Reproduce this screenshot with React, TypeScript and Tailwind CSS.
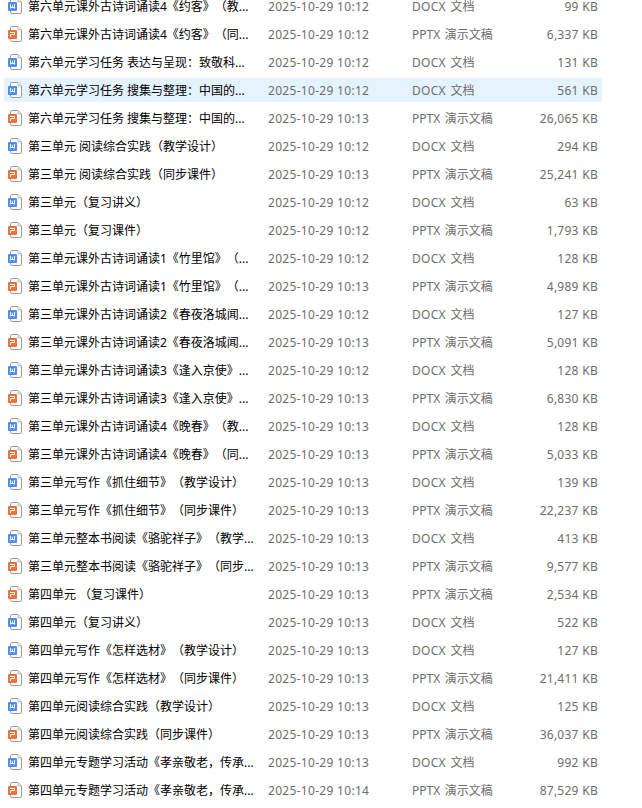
type FileKind = "docx" | "pptx";

type FileRow = {
  name: string;
  kind: FileKind;
  time: string;
  size: string;
};

const DAY = "2025-10-29";

const files: FileRow[] = [
  { name: "第六单元课外古诗词诵读4《约客》（教...", kind: "docx", time: "10:12", size: "99" },
  { name: "第六单元课外古诗词诵读4《约客》（同...", kind: "pptx", time: "10:12", size: "6,337" },
  { name: "第六单元学习任务 表达与呈现：致敬科...", kind: "docx", time: "10:12", size: "131" },
  { name: "第六单元学习任务 搜集与整理：中国的...", kind: "docx", time: "10:12", size: "561" },
  { name: "第六单元学习任务 搜集与整理：中国的...", kind: "pptx", time: "10:13", size: "26,065" },
  { name: "第三单元 阅读综合实践（教学设计）", kind: "docx", time: "10:12", size: "294" },
  { name: "第三单元 阅读综合实践（同步课件）", kind: "pptx", time: "10:13", size: "25,241" },
  { name: "第三单元（复习讲义）", kind: "docx", time: "10:12", size: "63" },
  { name: "第三单元（复习课件）", kind: "pptx", time: "10:12", size: "1,793" },
  { name: "第三单元课外古诗词诵读1《竹里馆》（...", kind: "docx", time: "10:12", size: "128" },
  { name: "第三单元课外古诗词诵读1《竹里馆》（...", kind: "pptx", time: "10:13", size: "4,989" },
  { name: "第三单元课外古诗词诵读2《春夜洛城闻...", kind: "docx", time: "10:12", size: "127" },
  { name: "第三单元课外古诗词诵读2《春夜洛城闻...", kind: "pptx", time: "10:13", size: "5,091" },
  { name: "第三单元课外古诗词诵读3《逢入京使》...", kind: "docx", time: "10:12", size: "128" },
  { name: "第三单元课外古诗词诵读3《逢入京使》...", kind: "pptx", time: "10:13", size: "6,830" },
  { name: "第三单元课外古诗词诵读4《晚春》（教...", kind: "docx", time: "10:13", size: "128" },
  { name: "第三单元课外古诗词诵读4《晚春》（同...", kind: "pptx", time: "10:13", size: "5,033" },
  { name: "第三单元写作《抓住细节》（教学设计）", kind: "docx", time: "10:13", size: "139" },
  { name: "第三单元写作《抓住细节》（同步课件）", kind: "pptx", time: "10:13", size: "22,237" },
  { name: "第三单元整本书阅读《骆驼祥子》（教学...", kind: "docx", time: "10:13", size: "413" },
  { name: "第三单元整本书阅读《骆驼祥子》（同步...", kind: "pptx", time: "10:13", size: "9,577" },
  { name: "第四单元 （复习课件）", kind: "pptx", time: "10:13", size: "2,534" },
  { name: "第四单元（复习讲义）", kind: "docx", time: "10:13", size: "522" },
  { name: "第四单元写作《怎样选材》（教学设计）", kind: "docx", time: "10:13", size: "127" },
  { name: "第四单元写作《怎样选材》（同步课件）", kind: "pptx", time: "10:13", size: "21,411" },
  { name: "第四单元阅读综合实践（教学设计）", kind: "docx", time: "10:13", size: "125" },
  { name: "第四单元阅读综合实践（同步课件）", kind: "pptx", time: "10:13", size: "36,037" },
  { name: "第四单元专题学习活动《孝亲敬老，传承...", kind: "docx", time: "10:13", size: "992" },
  { name: "第四单元专题学习活动《孝亲敬老，传承...", kind: "pptx", time: "10:14", size: "87,529" },
];

const SELECTED = 3;

function FileIcon({ kind }: { kind: FileKind }) {
  const isDoc = kind === "docx";
  return (
    <svg width="14" height="16" viewBox="0 0 14 16" className="block shrink-0">
      <path
        d="M4 0.5H10L13.5 4V14Q13.5 15.5 12 15.5H4Q2.5 15.5 2.5 14V2Q2.5 0.5 4 0.5Z"
        fill="#fff"
        stroke="#9c9c9c"
      />
      <path d="M10 0.8V4H13.3" fill="#e4e4e4" stroke="#b8b8b8" strokeWidth="0.8" />
      <rect y="4" width="9" height="9" rx="1" fill={isDoc ? "#4f8bf0" : "#f2703a"} />
      {isDoc ? (
        <path d="M2.5 6V10.5M2 9.5H7M4.5 7V10M6.5 6V10.5" fill="none" stroke="#fff" />
      ) : (
        <path d="M2 6.5H6.5V8.5H2.5V11" fill="none" stroke="#fff" />
      )}
    </svg>
  );
}

function Row({ file, selected }: { file: FileRow; selected: boolean }) {
  return (
    <div
      className={`my-0.5 ml-1 flex h-6 w-[598px] items-center rounded-xs px-1 text-[#6d6d6d] ${
        selected ? "bg-[#e5f3ff]" : ""
      }`}
    >
      <FileIcon kind={file.kind} />
      <span className="ml-1.5 w-60 shrink-0 pt-0.5 text-black">{file.name}</span>
      <span className="w-36 shrink-0 pt-0.5 tracking-[0.3px]">
        {DAY} {file.time}
      </span>
      {file.kind === "docx" ? (
        <span className="w-24 shrink-0 pt-0.5 [word-spacing:1.5px]">
          <span className="tracking-[0.3px]">DOCX</span> 文档
        </span>
      ) : (
        <span className="w-24 shrink-0 pt-0.5 [word-spacing:1.5px]">PPTX 演示文稿</span>
      )}
      <span className="flex-1 pt-0.5 text-right tracking-[0.2px] [word-spacing:0.5px]">
        {file.size} KB
      </span>
    </div>
  );
}

export default function App() {
  return (
    <div className="h-[808px] w-[642px] overflow-hidden bg-white">
      <div className="-mt-2 flex flex-col whitespace-nowrap font-['Noto_Sans','Noto_Sans_CJK_SC',sans-serif] text-xs leading-6 [text-spacing-trim:space-all]">
        {files.map((file, i) => (
          <Row key={i} file={file} selected={i === SELECTED} />
        ))}
      </div>
    </div>
  );
}
